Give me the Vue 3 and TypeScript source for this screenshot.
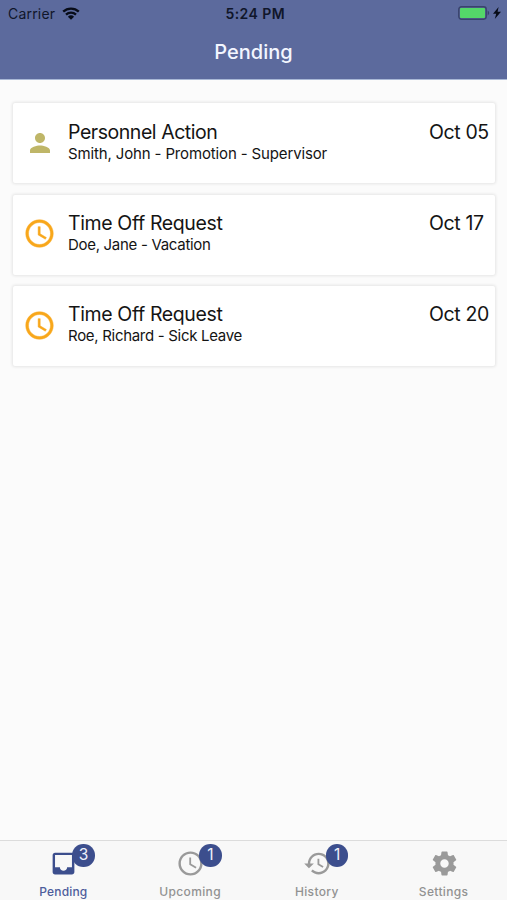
<script setup lang="ts">
type IconName = 'person' | 'clock' | 'inbox' | 'history' | 'settings'

interface RequestItem {
  icon: IconName
  title: string
  detail: string
  date: string
}

interface Tab {
  icon: IconName
  label: string
  count?: number
  active?: boolean
}

const icons: Record<IconName, string> = {
  person:
    'M12 12c2.21 0 4-1.79 4-4s-1.79-4-4-4-4 1.79-4 4 1.79 4 4 4zm0 2c-2.67 0-8 1.34-8 4v2h16v-2c0-2.66-5.33-4-8-4z',
  clock:
    'M11.99 2C6.47 2 2 6.48 2 12s4.47 10 9.99 10C17.52 22 22 17.52 22 12S17.52 2 11.99 2zM12 20c-4.42 0-8-3.58-8-8s3.58-8 8-8 8 3.58 8 8-3.58 8-8 8zm.5-13H11v6l5.25 3.15.75-1.23-4.5-2.67z',
  inbox:
    'M19 3H4.99c-1.11 0-1.98.89-1.98 2L3 19c0 1.1.88 2 1.99 2H19c1.1 0 2-.9 2-2V5c0-1.11-.9-2-2-2zm0 12h-4c0 1.66-1.35 3-3 3s-3-1.34-3-3H4.99V5H19v10z',
  history:
    'M13 3c-4.97 0-9 4.03-9 9H1l3.89 3.89.07.14L9 12H6c0-3.87 3.13-7 7-7s7 3.13 7 7-3.13 7-7 7c-1.93 0-3.68-.79-4.94-2.06l-1.42 1.42C8.27 19.99 10.51 21 13 21c4.97 0 9-4.03 9-9s-4.03-9-9-9zm-1 5v5l4.28 2.54.72-1.21-3.5-2.08V8H12z',
  settings:
    'M19.43 12.98c.04-.32.07-.64.07-.98s-.03-.66-.07-.98l2.11-1.65c.19-.15.24-.42.12-.64l-2-3.46c-.12-.22-.39-.3-.61-.22l-2.49 1c-.52-.4-1.08-.73-1.69-.98l-.38-2.65C14.46 2.18 14.25 2 14 2h-4c-.25 0-.46.18-.49.42l-.38 2.65c-.61.25-1.17.59-1.69.98l-2.49-1c-.23-.09-.49 0-.61.22l-2 3.46c-.13.22-.07.49.12.64l2.11 1.65c-.04.32-.07.65-.07.98s.03.66.07.98l-2.11 1.65c-.19.15-.24.42-.12.64l2 3.46c.12.22.39.3.61.22l2.49-1c.52.4 1.08.73 1.69.98l.38 2.65c.03.24.24.42.49.42h4c.25 0 .46-.18.49-.42l.38-2.65c.61-.25 1.17-.59 1.69-.98l2.49 1c.23.09.49 0 .61-.22l2-3.46c.12-.22.07-.49-.12-.64l-2.11-1.65zM12 15.5c-1.93 0-3.5-1.57-3.5-3.5s1.57-3.5 3.5-3.5 3.5 1.57 3.5 3.5-1.57 3.5-3.5 3.5z',
}

const requests: RequestItem[] = [
  { icon: 'person', title: 'Personnel Action', detail: 'Smith, John - Promotion - Supervisor', date: 'Oct 05' },
  { icon: 'clock', title: 'Time Off Request', detail: 'Doe, Jane - Vacation', date: 'Oct 17' },
  { icon: 'clock', title: 'Time Off Request', detail: 'Roe, Richard - Sick Leave', date: 'Oct 20' },
]

const tabs: Tab[] = [
  { icon: 'inbox', label: 'Pending', count: 3, active: true },
  { icon: 'clock', label: 'Upcoming', count: 1 },
  { icon: 'history', label: 'History', count: 1 },
  { icon: 'settings', label: 'Settings' },
]
</script>

<template>
  <div class="screen">
    <header class="header">
      <div class="status">
        <div class="carrier">
          <span>Carrier</span>
          <svg class="wifi" viewBox="0 0 18 13" aria-hidden="true">
            <path d="M1.2 4.7a11.3 11.3 0 0 1 15.6 0M4 7.7a7.2 7.2 0 0 1 10 0" />
            <path class="wifi-dot" d="M9 12.8 5.9 9.7a4.5 4.5 0 0 1 6.2 0z" />
          </svg>
        </div>
        <span class="time">5:24 PM</span>
        <div class="power">
          <svg class="battery" viewBox="0 0 32 14" aria-hidden="true">
            <rect class="shell" x=".8" y=".8" width="27.4" height="12.4" rx="2.6" />
            <rect class="charge" x="2" y="2" width="25" height="10" rx="1" />
            <path class="cap" d="M29.6 4.6c2.1.7 2.1 4.1 0 4.8z" />
          </svg>
          <svg class="bolt" viewBox="0 0 8 12" aria-hidden="true"><path d="M5.6 0 0 6.8h3.2L1.8 12 8 4.8H4.6z" /></svg>
        </div>
      </div>
      <h1 class="title">Pending</h1>
    </header>

    <main class="list">
      <article v-for="item in requests" :key="item.date" class="card" :class="`card-${item.icon}`">
        <div class="lead">
          <svg :class="item.icon" viewBox="0 0 24 24" aria-hidden="true"><path :d="icons[item.icon]" /></svg>
        </div>
        <div class="body">
          <h2 class="name">{{ item.title }}</h2>
          <p class="detail">{{ item.detail }}</p>
        </div>
        <span class="date">{{ item.date }}</span>
      </article>
    </main>

    <nav class="tabs">
      <div v-for="tab in tabs" :key="tab.label" class="tab" :class="{ active: tab.active }">
        <div class="glyph">
          <svg viewBox="0 0 24 24" aria-hidden="true"><path :d="icons[tab.icon]" /></svg>
          <span v-if="tab.count" class="badge">{{ tab.count }}</span>
        </div>
        <span class="label">{{ tab.label }}</span>
      </div>
    </nav>
  </div>
</template>

<style>
body {
  margin: 0;
}
</style>

<style scoped>
.screen {
  display: flex;
  flex-direction: column;
  width: 507px;
  height: 900px;
  overflow: hidden;
  background: #fbfbfb;
  color: #141414;
  font-family: Inter, 'Liberation Sans', sans-serif;
}

.header {
  box-sizing: border-box;
  height: 80px;
  background: #5c6a9d;
  border-bottom: 1px solid #a9b8d6;
}

.status {
  display: grid;
  grid-template-columns: 1fr auto 1fr;
  align-items: center;
  height: 27px;
  padding: 0 6px 0 8px;
  color: #10162a;
  font-size: 14px;
  line-height: 27px;
}

.carrier {
  display: flex;
  align-items: center;
  gap: 6.5px;
  letter-spacing: 0.2px;
}

.wifi {
  width: 18px;
  height: 13px;
  margin-top: -1px;
  fill: none;
  stroke: #080c18;
  stroke-width: 2.3;
}

.wifi-dot {
  fill: #080c18;
  stroke: none;
}

.time {
  margin-left: 1.5px;
  font-size: 14px;
  font-weight: 600;
  letter-spacing: 0.45px;
}

.power {
  display: flex;
  justify-content: flex-end;
  align-items: center;
  gap: 3.5px;
}

.battery {
  width: 32px;
  height: 14px;
  margin-top: -1px;
}

.shell {
  fill: none;
  stroke: #39436b;
  stroke-width: 1.4;
}

.charge {
  fill: #54d769;
}

.cap {
  fill: #39436b;
}

.bolt {
  width: 8px;
  height: 12px;
  margin-top: -1px;
  fill: #080c18;
}

.title {
  margin: 0;
  color: #f3f6ff;
  font-size: 20px;
  font-weight: 500;
  line-height: 51px;
  text-align: center;
}

.list {
  flex: 1;
  display: flex;
  flex-direction: column;
  gap: 11.5px;
  padding: 23px 12px 0 13px;
}

.card {
  display: flex;
  box-sizing: border-box;
  height: 80px;
  padding-top: 17px;
  border-radius: 2px;
  background: #fff;
  box-shadow: 0 0 3px 1px rgba(0, 0, 0, 0.09);
}

.card-clock {
  padding-top: 16px;
}

.lead {
  display: flex;
  justify-content: center;
  width: 55px;
}

.lead svg {
  display: block;
}

.person {
  width: 30px;
  height: 30px;
  margin: 7.5px 1px 0 0;
  fill: #bfb668;
}

.clock {
  width: 33px;
  height: 33px;
  margin: 6.5px 2px 0 0;
  fill: #f8a71b;
  stroke: #f8a71b;
  stroke-width: 0.35;
}

.body {
  flex: 1;
}

.name,
.date {
  margin: 0;
  font-size: 19.5px;
  font-weight: 400;
  line-height: 24px;
  letter-spacing: -0.38px;
  white-space: nowrap;
}

.detail {
  margin: 0;
  font-size: 15px;
  line-height: 19px;
  letter-spacing: -0.3px;
  white-space: nowrap;
}

.card-person .name {
  letter-spacing: -0.45px;
}

.card-person .detail {
  letter-spacing: -0.14px;
}

.date {
  width: 66px;
}

.tabs {
  box-sizing: border-box;
  display: grid;
  grid-template-columns: repeat(4, 1fr);
  height: 60px;
  border-top: 1px solid #dcdcdc;
  background: #f8f8f8;
}

.tab {
  display: flex;
  flex-direction: column;
  align-items: center;
  color: #929292;
}

.glyph {
  position: relative;
  width: 29px;
  height: 29px;
  margin: 8px 0 0 1px;
}

.glyph svg {
  display: block;
  width: 29px;
  height: 29px;
  fill: #9a9a9a;
}

.badge {
  position: absolute;
  top: -5px;
  left: 23px;
  width: 22.5px;
  height: 22.5px;
  border-radius: 50%;
  background: #3c4e8d;
  color: #eef1fb;
  font-size: 15.5px;
  line-height: 22.5px;
  text-align: center;
}

.label {
  margin-top: 6px;
  font-size: 12px;
  font-weight: 500;
  line-height: 16px;
  letter-spacing: 0.35px;
}

.active {
  color: #4e5d9c;
}

.active .label {
  letter-spacing: 0.15px;
}

.glyph svg {
  flex: none;
}

.active .glyph svg {
  fill: #3c4e8d;
}
</style>
